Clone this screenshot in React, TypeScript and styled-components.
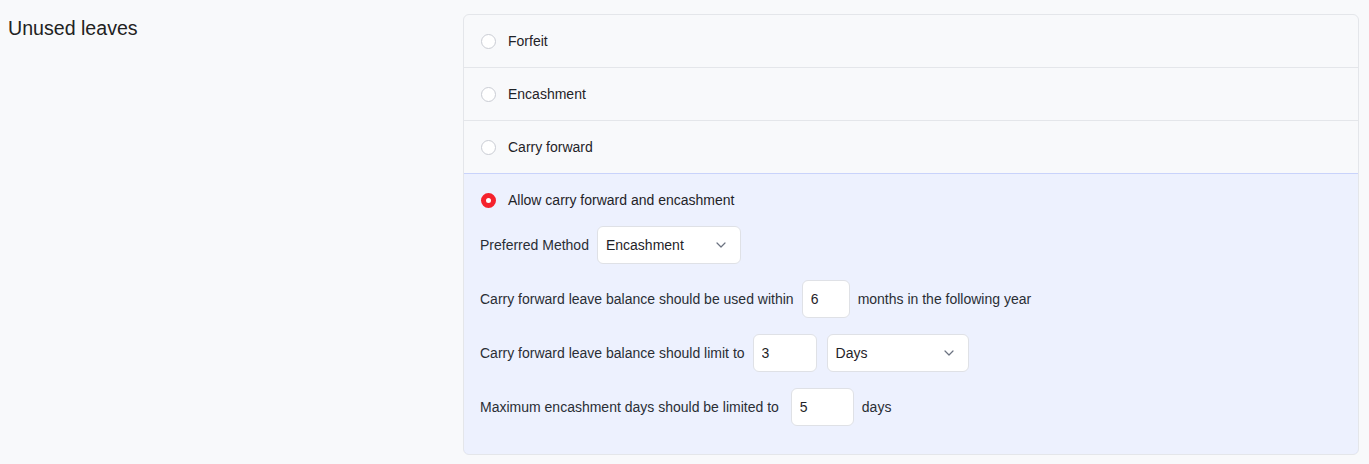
import React, { useState } from "react";
import styled, { createGlobalStyle } from "styled-components";

const GlobalStyle = createGlobalStyle`
  html, body {
    margin: 0;
    padding: 0;
    background: #f8f9fb;
    font-family: "Liberation Sans", Arial, sans-serif;
    color: #1f2328;
  }
`;

const Page = styled.div`
  display: flex;
  align-items: flex-start;
  padding: 14px 10px 10px 8px;
  height: 464px;
  box-sizing: border-box;
`;

const Title = styled.h2`
  width: 455px;
  margin: 2px 0 0;
  font-size: 19.6px;
  font-weight: 400;
  color: #222;
  line-height: 24px;
`;

const Card = styled.div`
  flex: 1;
  border: 1px solid #e4e6ea;
  border-radius: 6px;
  background: #f8f9fb;
  overflow: hidden;
`;

const Option = styled.div<{ $active?: boolean }>`
  display: flex;
  flex-direction: column;
  gap: 16px;
  padding: ${(p) => (p.$active ? "16px 16px 28px" : "16px")};
  background: ${(p) => (p.$active ? "#edf1fe" : "transparent")};
  border-top: 1px solid ${(p) => (p.$active ? "#c9d3fb" : "#e4e6ea")};
  &:first-child {
    border-top: none;
  }
  ${(p) =>
    p.$active &&
    `
    margin: 0 -1px -1px;
    border: 1px solid #c9d3fb;
    border-radius: 0 0 6px 6px;
  `}
`;

const RadioLine = styled.label`
  display: flex;
  align-items: center;
  gap: 12px;
  height: 20px;
  font-size: 14px;
  color: #1f2328;
  cursor: pointer;
`;

const Dot = styled.span<{ $checked?: boolean }>`
  width: 15px;
  height: 15px;
  box-sizing: border-box;
  border-radius: 50%;
  flex-shrink: 0;
  margin-left: 1px;
  background: #fff;
  border: ${(p) => (p.$checked ? "5px solid #f5222d" : "1px solid #cacdd4")};
`;

const Row = styled.div`
  display: flex;
  align-items: center;
  gap: 8px;
  font-size: 14px;
  color: #2a2e35;
  height: 38px;
`;

const Field = styled.input<{ $w: number; $gapBefore?: number }>`
  width: ${(p) => p.$w}px;
  height: 38px;
  box-sizing: border-box;
  margin: 0 0 0 ${(p) => p.$gapBefore ?? 0}px;
  border: 1px solid #dfe1e6;
  border-radius: 6px;
  background: #fff;
  padding: 0 8px;
  font-family: inherit;
  font-size: 14px;
  color: #1f2328;
  outline: none;
`;

const SelectBox = styled.div<{ $w: number; $gapBefore?: number }>`
  width: ${(p) => p.$w}px;
  height: 38px;
  box-sizing: border-box;
  display: flex;
  align-items: center;
  justify-content: space-between;
  margin-left: ${(p) => p.$gapBefore ?? 0}px;
  border: 1px solid #dfe1e6;
  border-radius: 6px;
  background: #fff;
  padding: 0 14px 0 8px;
  font-size: 14px;
  color: #1f2328;
`;

const Chevron = () => (
  <svg width="10" height="6" viewBox="0 0 10 6" fill="none">
    <path d="M1 1l4 4 4-4" stroke="#6b7280" strokeWidth="1.2" strokeLinecap="round" strokeLinejoin="round" />
  </svg>
);

const options = ["Forfeit", "Encashment", "Carry forward", "Allow carry forward and encashment"];

export default function App() {
  const [selected, setSelected] = useState(3);
  const [months, setMonths] = useState("6");
  const [limit, setLimit] = useState("3");
  const [maxDays, setMaxDays] = useState("5");

  return (
    <>
      <GlobalStyle />
      <Page>
        <Title>Unused leaves</Title>
        <Card>
          {options.map((o, i) => (
            <Option key={o} $active={i === selected}>
              <RadioLine onClick={() => setSelected(i)}>
                <Dot $checked={i === selected} />
                {o}
              </RadioLine>
              {i === selected && i === 3 && (
                <>
                  <Row>
                    Preferred Method
                    <SelectBox $w={144}>
                      Encashment
                      <Chevron />
                    </SelectBox>
                  </Row>
                  <Row>
                    Carry forward leave balance should be used within
                    <Field $w={48} value={months} onChange={(e) => setMonths(e.target.value)} />
                    months in the following year
                  </Row>
                  <Row>
                    Carry forward leave balance should limit to
                    <Field $w={64} value={limit} onChange={(e) => setLimit(e.target.value)} />
                    <SelectBox $w={142} $gapBefore={2}>
                      Days
                      <Chevron />
                    </SelectBox>
                  </Row>
                  <Row>
                    Maximum encashment days should be limited to
                    <Field $w={63} $gapBefore={4} value={maxDays} onChange={(e) => setMaxDays(e.target.value)} />
                    days
                  </Row>
                </>
              )}
            </Option>
          ))}
        </Card>
      </Page>
    </>
  );
}
